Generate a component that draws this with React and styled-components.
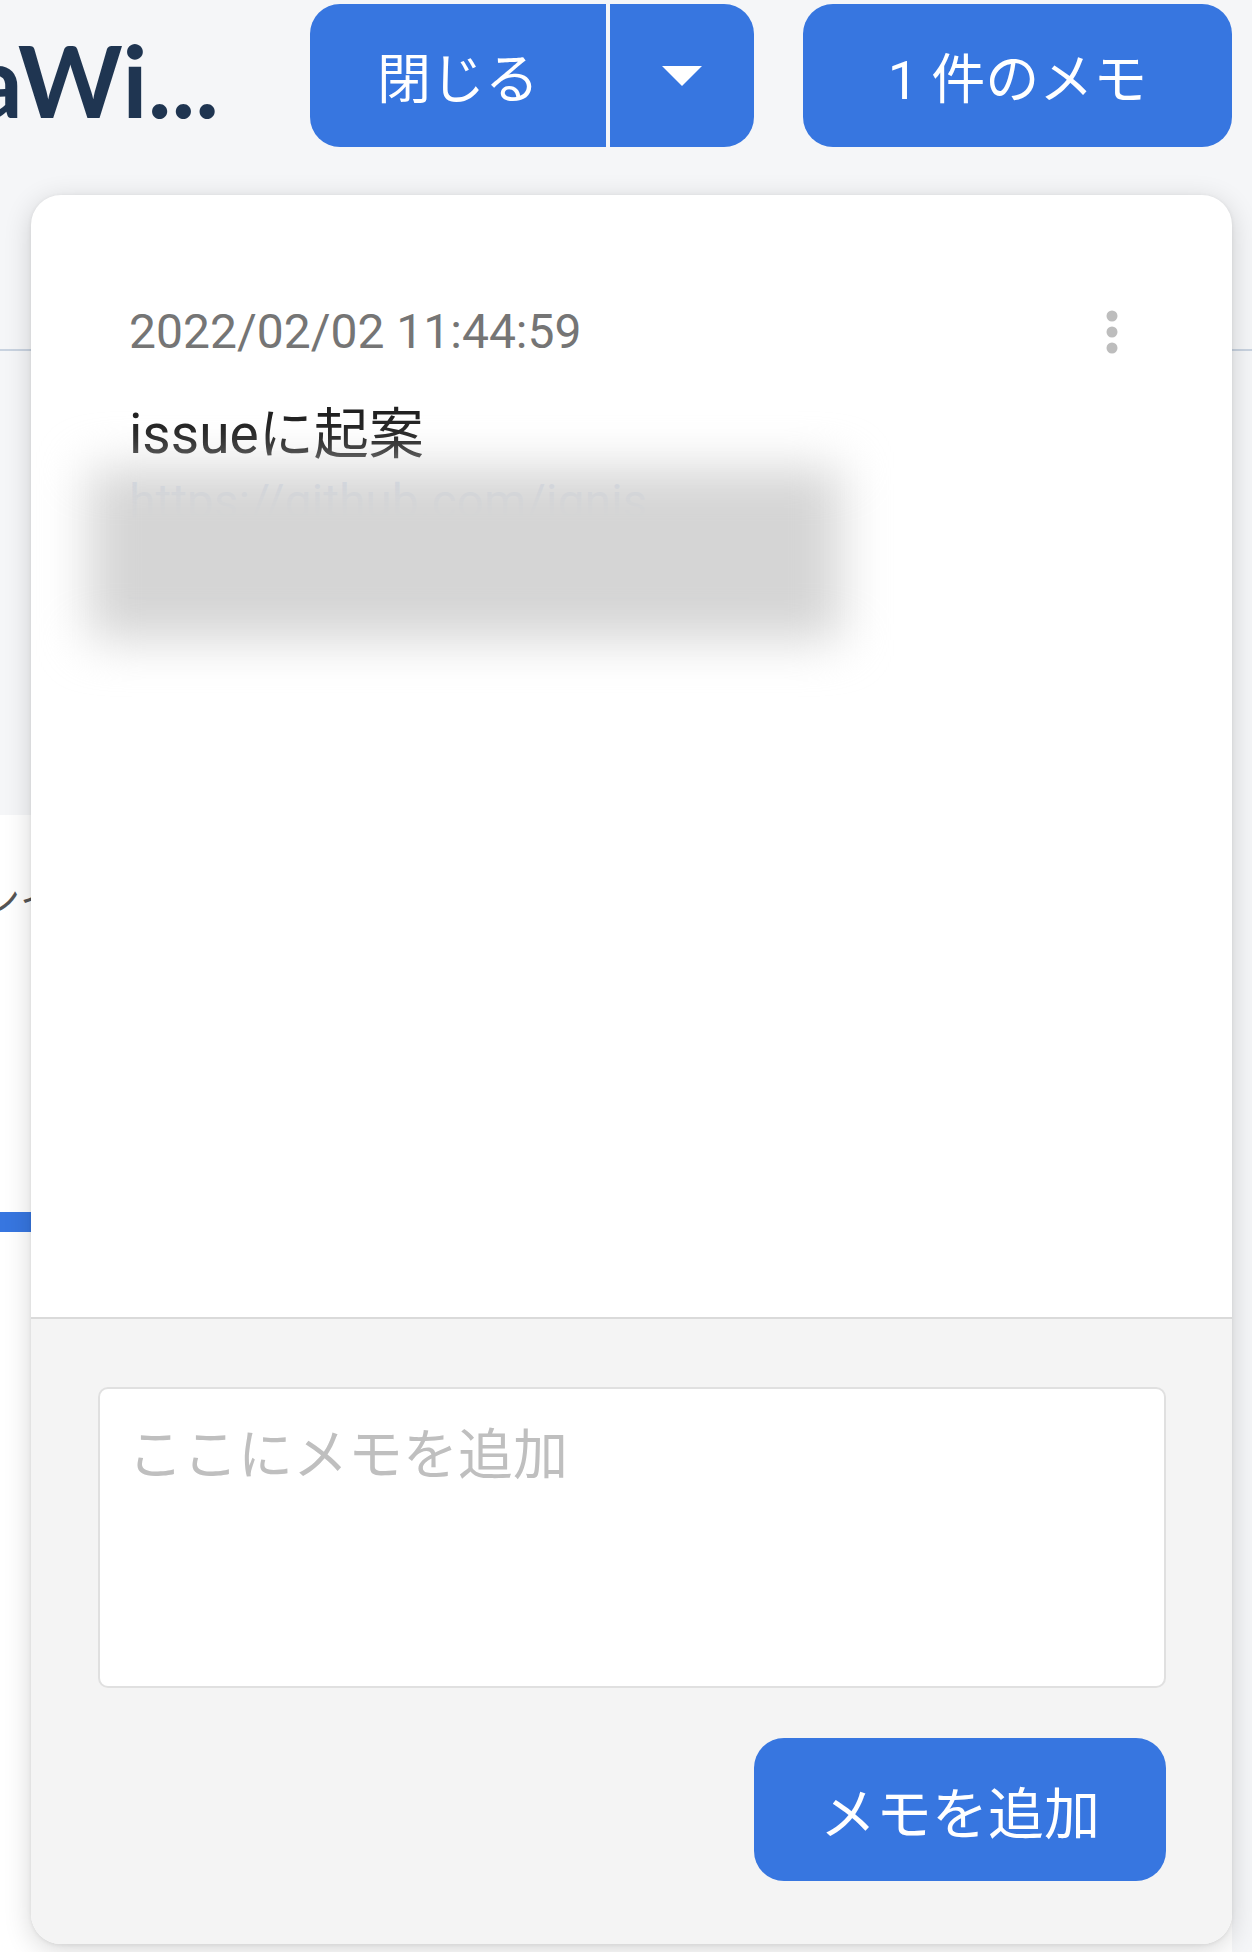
import React from "react"
import styled, { createGlobalStyle } from "styled-components"

const GlobalStyle = createGlobalStyle`
    html, body {
        margin: 0;
        padding: 0;
        background: #f5f6f8;
    }
    * {
        box-sizing: border-box;
    }
`

const Page = styled.div`
    position: relative;
    width: 1252px;
    height: 1952px;
    overflow: hidden;
    display: flex;
    flex-direction: column;
    background: #f5f6f8;
    font-family: Roboto, "Noto Sans CJK JP", sans-serif;
`

const Header = styled.header`
    height: 152px;
    padding-top: 4px;
    display: flex;
    align-items: flex-start;
    gap: 49px;
`

const Title = styled.h1`
    flex: 0 0 auto;
    width: 289px;
    margin: 15px 0 0 -28px;
    font-family: Lato, sans-serif;
    font-weight: 700;
    font-size: 100px;
    line-height: 120px;
    color: #1f3551;
    white-space: nowrap;
`

const ButtonGroup = styled.div`
    display: flex;
    gap: 4px;
    width: 444px;
    height: 143px;
    border-radius: 30px;
    overflow: hidden;
`

const BlueButton = styled.button`
    display: flex;
    align-items: center;
    justify-content: center;
    width: ${(p) => p.$w}px;
    height: 143px;
    padding: 0;
    border: none;
    border-radius: ${(p) => (p.$flat ? 0 : 30)}px;
    background: #3776e0;
    color: #fff;
    font-family: Roboto, "Noto Sans CJK JP", sans-serif;
    font-size: ${(p) => p.$size || 54}px;
    font-weight: 400;
    cursor: pointer;
`

const Caret = styled.span`
    width: 0;
    height: 0;
    border-left: 20px solid transparent;
    border-right: 20px solid transparent;
    border-top: 20px solid #fff;
`

const TabArea = styled.div`
    height: 199px;
    border-bottom: 2px solid #c9d3e0;
`

const GreyBand = styled.div`
    height: 464px;
`

const WhitePanel = styled.div`
    flex: 1;
    margin-right: 20px;
    background: #fff;
    padding-top: 62px;
`

const PanelText = styled.p`
    margin: 0 0 0 -20px;
    font-size: 40px;
    line-height: 48px;
    color: #555;
`

const Progress = styled.div`
    margin-top: 287px;
    height: 20px;
    width: 600px;
    background: #3776e0;
`

const Card = styled.div`
    position: absolute;
    top: 195px;
    left: 31px;
    width: 1201px;
    height: 1749px;
    border-radius: 30px;
    background: #fff;
    box-shadow: 0 6px 28px rgba(0, 0, 0, 0.16), 0 1px 4px rgba(0, 0, 0, 0.08);
    overflow: hidden;
    display: flex;
    flex-direction: column;
`

const CardBody = styled.div`
    flex: 1;
    padding: 109px 108px 0 98px;
`

const DateRow = styled.div`
    display: flex;
    align-items: center;
    justify-content: space-between;
    height: 56px;
`

const DateText = styled.span`
    font-size: 48px;
    line-height: 56px;
    color: #757575;
`

const MoreButton = styled.button`
    display: flex;
    align-items: center;
    justify-content: center;
    width: 24px;
    height: 56px;
    padding: 0;
    border: none;
    background: none;
`

const MemoText = styled.p`
    margin: 42px 0 0;
    font-size: 55px;
    line-height: 64px;
    color: #212121;
`

const LinkBlock = styled.div`
    position: relative;
    margin-top: 8px;
    width: 720px;
`

const LinkText = styled.a`
    display: block;
    font-size: 48px;
    line-height: 56px;
    color: #c9d6ee;
    text-decoration: none;
`

const PreviewLine = styled.div`
    margin-top: 67px;
    height: 2px;
    width: 620px;
    background: #dde3ee;
`

const Blur = styled.div`
    position: absolute;
    top: -6px;
    left: -40px;
    width: 752px;
    height: 172px;
    background: #d5d5d5;
    filter: blur(24px);
`

const Footer = styled.div`
    display: flex;
    flex-direction: column;
    align-items: flex-end;
    gap: 50px;
    border-top: 2px solid #dadada;
    background: #f4f4f4;
    padding: 68px 66px 63px 67px;
`

const MemoInput = styled.textarea`
    width: 100%;
    height: 301px;
    border: 2px solid #e0e0e0;
    border-radius: 10px;
    background: #fff;
    padding: 34px 28px;
    font-family: Roboto, "Noto Sans CJK JP", sans-serif;
    font-size: 55px;
    line-height: 64px;
    color: #212121;
    resize: none;
    outline: none;
    &::placeholder {
        color: #bfbfbf;
    }
`

function MoreIcon() {
    return (
        <svg width="12" height="44" viewBox="0 0 12 44">
            <circle cx="6" cy="6" r="5.5" fill="#bdbdbd" />
            <circle cx="6" cy="22" r="5.5" fill="#bdbdbd" />
            <circle cx="6" cy="38" r="5.5" fill="#bdbdbd" />
        </svg>
    )
}

export default function App() {
    return (
        <Page>
            <GlobalStyle />
            <Header>
                <Title>aWi...</Title>
                <ButtonGroup>
                    <BlueButton $w={296} $flat>閉じる</BlueButton>
                    <BlueButton $w={144} $flat>
                        <Caret />
                    </BlueButton>
                </ButtonGroup>
                <BlueButton $w={429}>1 件のメモ</BlueButton>
            </Header>
            <TabArea />
            <GreyBand />
            <WhitePanel>
                <PanelText>ンイ</PanelText>
                <Progress />
            </WhitePanel>

            <Card>
                <CardBody>
                    <DateRow>
                        <DateText>2022/02/02 11:44:59</DateText>
                        <MoreButton>
                            <MoreIcon />
                        </MoreButton>
                    </DateRow>
                    <MemoText>issueに起案</MemoText>
                    <LinkBlock>
                        <LinkText href="#">https://github.com/ignis</LinkText>
                        <PreviewLine />
                        <Blur />
                    </LinkBlock>
                </CardBody>
                <Footer>
                    <MemoInput placeholder="ここにメモを追加" />
                    <BlueButton $w={412} $size={56}>メモを追加</BlueButton>
                </Footer>
            </Card>
        </Page>
    )
}
